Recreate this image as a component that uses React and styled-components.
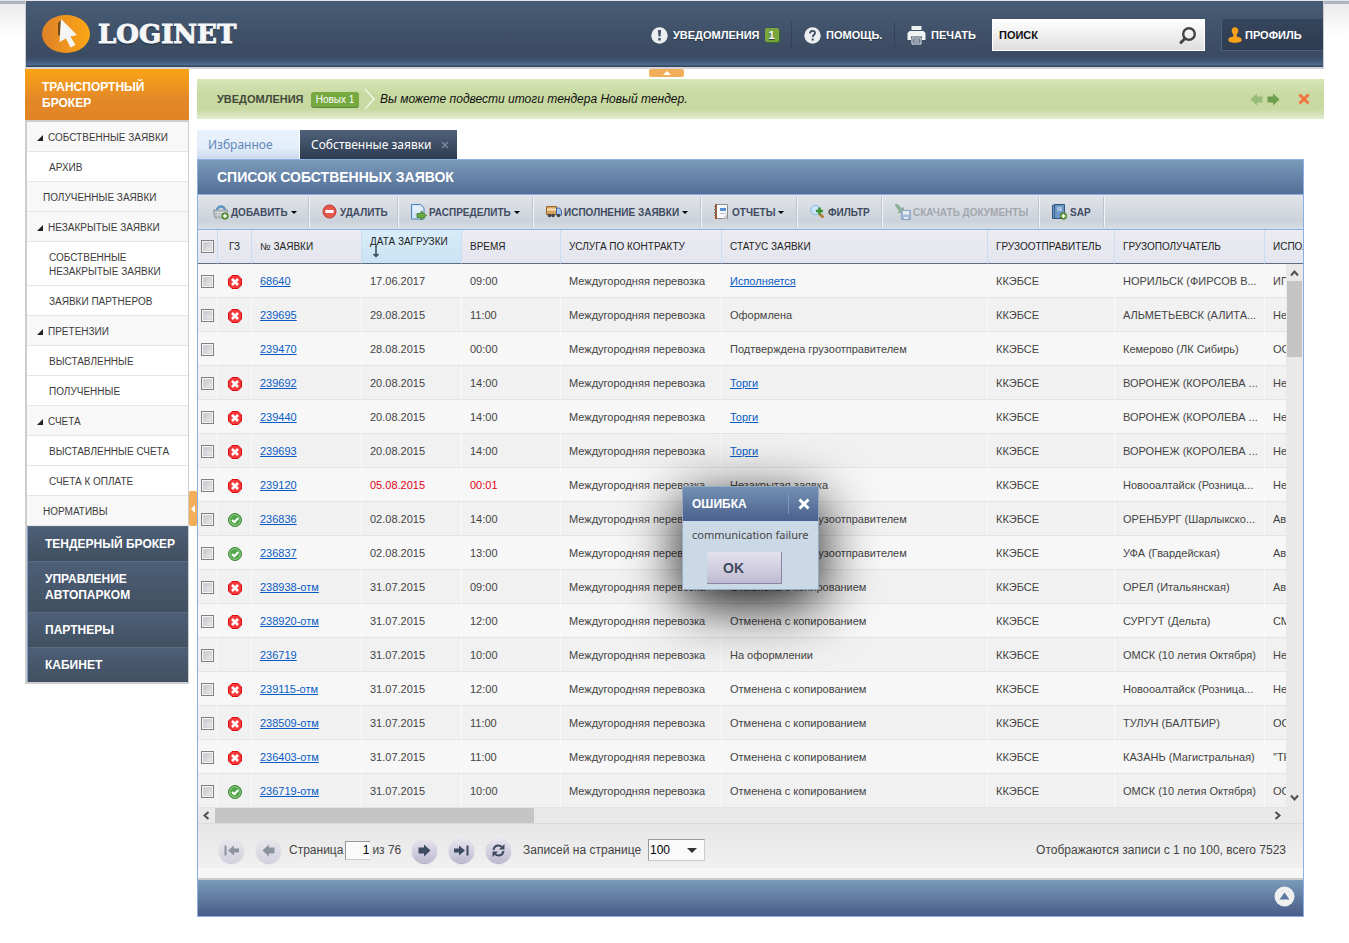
import React from 'react';
import styled, { createGlobalStyle } from 'styled-components';

const sans = '"Liberation Sans", Arial, sans-serif';
const humanist = '"Noto Sans", "Open Sans", sans-serif';

const GlobalStyle = createGlobalStyle`
  *, *::before, *::after { box-sizing: border-box; }
  body {
    margin: 0;
    font-family: ${sans};
    font-size: 11px;
    color: #444;
    background: #fff;
  }
  button, input, select { font-family: inherit; margin: 0; }
  button { padding: 0; border: 0; background: none; cursor: pointer; }
  a { color: inherit; text-decoration: none; }
  svg { display: block; flex: none; }
`;

const Page = styled.div`
  border-top: 1px solid #e6e6ea;
  padding: 0 25px 26px;
  background: linear-gradient(#abb4c1, #abb4c1) 0 0 / 100% 3px no-repeat,
    linear-gradient(#ebebeb, #fff) 0 3px / 100% 32px no-repeat;
`;

/* ---------- header ---------- */

const Header = styled.header`
  display: flex;
  align-items: center;
  height: 68px;
  padding: 2px 0 0 16px;
  border-bottom: 2px solid #d3d3d8;
  border-left: 1px solid #c9cdd3;
  border-right: 1px solid #c9cdd3;
  background: linear-gradient(#485c75 0, #3a4a61 54px, #3f5371 59px, #4f6b91 64px, #33445c 65px);
`;

const Logo = styled.a`
  display: flex;
  align-items: center;
  gap: 8px;
  margin: 0 auto 2px 0;
  color: #f4f6f8;
  font: bold 26px/38px "DejaVu Serif", serif;
  -webkit-text-stroke: 1px #f4f6f8;
  text-shadow: 0 2px 1px #2b384a;
`;

const NavItem = styled.a`
  display: flex;
  align-items: center;
  gap: 5px;
  width: ${(p) => p.$w}px;
  height: 26px;
  padding-left: ${(p) => (p.$first ? 0 : 12)}px;
  color: #fff;
  font-size: 11px;
  font-weight: bold;
  text-shadow: 0 1px 1px #222f40;
  border-right: ${(p) => (p.$last ? 0 : 1)}px solid #33435a;
`;

const Badge = styled.span`
  width: 14px;
  height: 14px;
  border-radius: 2px;
  background: #76a63c;
  box-shadow: 1px 1px 0 #3c6a2a;
  font-size: 11px;
  line-height: 14px;
  text-align: center;
`;

const Search = styled.form`
  display: flex;
  align-items: center;
  width: 213px;
  height: 32px;
  padding-right: 7px;
  margin-right: 16px;
  border: 1px solid #fff;
  background: linear-gradient(#fff, #dedede);
`;

const SearchInput = styled.input`
  flex: 1;
  min-width: 0;
  padding: 0 0 0 6px;
  border: 0;
  outline: 0;
  background: none;
  color: #111;
  font-size: 11px;
  font-weight: bold;
  &::placeholder { color: #111; opacity: 1; }
`;

const Profile = styled.button`
  display: flex;
  align-items: center;
  gap: 3px;
  width: 102px;
  height: 32px;
  padding-left: 6px;
  border: 1px solid #49628a;
  border-width: 0 0 1px 1px;
  background: linear-gradient(#35455c, #2f3c50);
  color: #fff;
  font-size: 11px;
  font-weight: bold;
`;

/* ---------- page body ---------- */

const Columns = styled.div`
  display: flex;
  align-items: flex-start;
`;

const Sidebar = styled.nav`
  position: relative;
  flex: none;
  width: 164px;
`;

const Active = styled.a`
  display: block;
  padding: 10px 17px 9px;
  background: linear-gradient(#fba316, #e38827 60%, #e18426);
  color: #fff;
  font-size: 12px;
  font-weight: bold;
  line-height: 16px;
`;

const MenuList = styled.ul`
  margin: 0;
  padding: 0;
  list-style: none;
  border: 2px solid #cdcdcd;
  border-right-width: 1px;
`;

const MenuLink = styled.a`
  display: flex;
  align-items: center;
  gap: 5px;
  padding: 9px 12px 6px ${(p) => ({ group: 10, leaf: 16, sub: 22 })[p.$kind]}px;
  border-bottom: 1px solid #e6e6e6;
  background: ${(p) => (p.$kind === 'sub' ? '#fff' : '#f8f8f8')};
  color: #3c3c3c;
  font-size: 10px;
  line-height: 14px;
`;

const Section = styled.a`
  display: block;
  padding: 9px 4px 9px 17px;
  border-top: 1px solid #5a6b80;
  border-left: 1px solid #7d9cc6;
  background: linear-gradient(#4d5f77, #415061);
  color: #fff;
  font-size: 12px;
  font-weight: bold;
  line-height: 16px;
`;

const SideHandle = styled.button`
  position: absolute;
  left: 100%;
  top: 422px;
  display: grid;
  place-items: center;
  width: 8px;
  height: 35px;
  border-radius: 2px;
  background: #f2ae59;
`;

const TopHandle = styled.button`
  display: grid;
  place-items: center;
  width: 35px;
  height: 8px;
  margin: 0 0 2px 452px;
  border-radius: 2px;
  background: #f2ae59;
`;

const Main = styled.main`
  flex: 1;
  min-width: 0;
  margin-left: 8px;
`;

const Notice = styled.section`
  display: flex;
  align-items: center;
  height: 40px;
  padding: 0 14px 0 20px;
  background: linear-gradient(#d8e6b9, #c8d9a1 40%, #c8d9a1 75%, #e3edcf);
`;

const NoticeTitle = styled.strong`
  width: 94px;
  color: #42493a;
  font-size: 11px;
  font-weight: bold;
`;

const NoticeCount = styled.span`
  width: 48px;
  height: 15px;
  border-radius: 3px;
  background: #76a93f;
  box-shadow: 0 1px 0 #598636;
  color: #fff;
  font-size: 10px;
  line-height: 15px;
  text-align: center;
`;

const NoticeText = styled.em`
  flex: 1;
  color: #111;
  font-size: 12px;
`;

const NoticeActions = styled.div`
  display: flex;
  align-items: center;
  gap: 4px;
  & > :last-child { margin-left: 14px; }
`;

const Tabs = styled.div`
  display: flex;
  gap: 1px;
  margin-top: 11px;
  font-family: ${humanist};
`;

const Tab = styled.button`
  display: flex;
  align-items: center;
  justify-content: space-between;
  width: ${(p) => p.$w}px;
  height: 29px;
  padding: 0 8px 0 11px;
  font-size: 12px;
  color: ${(p) => (p.$on ? '#fff' : '#5d86b6')};
  background: ${(p) => (p.$on ? 'linear-gradient(#4f617a, #2d3b50)' : 'linear-gradient(#e9f3fd, #e3eefa 60%, #c9d9ea)')};
`;

const Panel = styled.section`
  position: relative;
  margin-right: 20px;
  border: 1px solid #8db0e3;
  background: #f6f6f6;
`;

const PanelTitle = styled.h1`
  margin: 0;
  padding-left: 19px;
  border-bottom: 1px solid #8db0e3;
  background: linear-gradient(#7b9bba, #546d97);
  color: #fff;
  font-size: 14px;
  font-weight: bold;
  line-height: 34px;
`;

const Toolbar = styled.div`
  display: flex;
  align-items: center;
  height: 35px;
  border-bottom: 1px solid #8db0e3;
  background: linear-gradient(#e2e5ea, #cbd2da 75%, #d9dee5);
`;

const ToolButton = styled.button`
  display: flex;
  align-items: center;
  gap: 2px;
  width: ${(p) => p.$w}px;
  height: 30px;
  padding-left: ${(p) => (p.$first ? 15 : 12)}px;
  border-right: 1px solid #f2f4f7;
  box-shadow: inset -1px 0 0 #bcc3cd;
  color: #3f4b60;
  font-size: 10px;
  font-weight: bold;
  white-space: nowrap;
  &:disabled { color: #a3a7ad; cursor: default; }
  &:disabled svg { opacity: 0.5; }
`;

const Caret = styled.i`
  margin-left: 1px;
  border: 3px solid transparent;
  border-top-color: #000;
  border-bottom: 0;
`;

/* ---------- grid ---------- */

const Viewport = styled.div`
  position: relative;
  overflow: hidden;
`;

const Table = styled.table`
  width: 1177px;
  table-layout: fixed;
  border-collapse: separate;
  border-spacing: 0;
`;

const Th = styled.th`
  height: 34px;
  padding: 1px 0 0 8px;
  border-right: 1px solid #cbddf0;
  border-bottom: 1px solid #5f6b7f;
  background: ${(p) => (p.$sorted ? 'linear-gradient(#d9ecf8, #c9e3f4)' : 'linear-gradient(#ececf1, #e3e5ef)')};
  color: #222;
  font-size: 10px;
  font-weight: normal;
  line-height: 12px;
  text-align: ${(p) => (p.$center ? 'center' : 'left')};
  white-space: nowrap;
  &:first-child { padding: 0 0 0 3px; }
  &:nth-child(2) { padding-left: 0; }
  & svg { margin: -2px 0 0 2px; }
`;

const Td = styled.td`
  height: 34px;
  padding: 1px 0 0 8px;
  overflow: hidden;
  border-right: 1px solid #fafafa;
  border-bottom: 1px solid #e3e3e3;
  color: ${(p) => (p.$late ? '#e2001a' : '#444')};
  font-size: 11px;
  white-space: nowrap;
  &:first-child { padding: 2px 0 0 3px; }
  &:nth-child(2) { padding: 3px 0 0 10px; }
`;

const Tr = styled.tr`
  background: #f7f7f7;
  &:nth-child(even) { background: #f1f1f1; }
`;

const CellLink = styled.a`
  color: #0a5cc4;
  text-decoration: underline;
`;

const Check = styled.input`
  appearance: none;
  display: block;
  width: 13px;
  height: 13px;
  border: 1px solid #808080;
  background: linear-gradient(135deg, #b9bdc5, #f3f3f3);
  box-shadow: inset 0 0 0 1px #f4f4f4, inset 0 0 0 2px #d4d4d6;
`;

const VScroll = styled.div`
  position: absolute;
  top: 34px;
  right: 0;
  bottom: 0;
  display: flex;
  flex-direction: column;
  align-items: center;
  width: 17px;
  padding: 5px 0 6px;
  background: #e9e9e9;
`;

const VThumb = styled.div`
  width: 15px;
  height: 76px;
  margin: 3px 0 auto;
  background: #c5c5c5;
`;

const HScroll = styled.div`
  display: flex;
  align-items: center;
  height: 15px;
  padding: 0 21px 0 4px;
  background: #e9e9e9;
`;

const HThumb = styled.div`
  width: 319px;
  height: 15px;
  margin: 0 auto 0 4px;
  background: #c5c5c5;
`;

/* ---------- pager ---------- */

const Pager = styled.div`
  display: flex;
  align-items: center;
  height: 55px;
  padding: 8px 17px 0 21px;
  border-top: 1px solid #dadada;
  border-bottom: 10px solid #f6f6f6;
  background: linear-gradient(#e7e7e7, #f0f0f0);
  font-size: 12px;
  color: #444;
`;

const RoundButton = styled.button`
  display: grid;
  place-items: center;
  width: 25px;
  height: 25px;
  margin-right: 12px;
  border-radius: 50%;
  background: linear-gradient(#e9e7f0, #bcb9d0);
  box-shadow: 0 1px 1px #a9a5c2;
  color: #3d4b60;
  &:disabled { opacity: 0.55; }
`;

const PageLabel = styled.label`
  display: flex;
  align-items: center;
  gap: 2px;
  width: 123px;
  margin-left: -4px;
  white-space: nowrap;
`;

const PageInput = styled.input`
  width: 25px;
  height: 19px;
  padding: 0 1px 0 0;
  border: 1px solid #999;
  border-right: 0;
  border-bottom-color: #ccc;
  background: #fafafa;
  font-size: 12px;
  text-align: right;
  color: #000;
`;

const SizeField = styled.label`
  display: flex;
  align-items: center;
`;

const SizeText = styled.span`
  width: 125px;
`;

const SelectWrap = styled.span`
  position: relative;
  & svg { position: absolute; right: 8px; top: 9px; pointer-events: none; }
`;

const Select = styled.select`
  appearance: none;
  display: block;
  width: 57px;
  height: 22px;
  padding: 0 0 0 1px;
  border: 1px solid #999;
  border-right-color: #ccc;
  border-bottom-color: #ccc;
  border-radius: 0;
  background: #fafafa;
  font-size: 12px;
  color: #000;
`;

const Total = styled.span`
  margin-left: auto;
`;

const PanelFooter = styled.div`
  display: flex;
  align-items: center;
  justify-content: flex-end;
  height: 38px;
  padding: 0 8px 3px 0;
  border-top: 2px solid #c9cbcf;
  background: linear-gradient(#7b9bba, #485c88);
`;

/* ---------- dialog ---------- */

const Dialog = styled.div`
  position: absolute;
  inset: 0;
  z-index: 2;
  width: 137px;
  height: fit-content;
  margin: auto;
  border: 1px solid #93a9c4;
  background: #cbd8e6;
  box-shadow: 0 14px 56px rgba(0, 0, 0, 0.95);
`;

const DialogHead = styled.div`
  display: flex;
  align-items: center;
  justify-content: space-between;
  height: 34px;
  padding-left: 9px;
  background: linear-gradient(#7391b3, #4b5f8e);
  color: #fff;
  font-size: 12px;
  font-weight: bold;
`;

const DialogClose = styled.button`
  display: grid;
  place-items: center;
  width: 30px;
  height: 20px;
  border-left: 1px solid #7f97ba;
`;

const DialogText = styled.p`
  margin: 0;
  padding: 5px 9px 4px;
  font: 11px/18px ${humanist};
  color: #444;
  white-space: nowrap;
`;

const DialogButton = styled.button`
  display: block;
  width: 75px;
  height: 32px;
  margin: 4px 24px 5px;
  padding-left: 16px;
  border: 1px solid #8784a4;
  border-width: 0 1px 1px 0;
  background: linear-gradient(#e4e2ed, #bfbcd2);
  color: #3f4b60;
  font-size: 14px;
  font-weight: bold;
  text-align: left;
`;

/* ---------- drawings ---------- */

const LogoMark = () => (
  <svg width="48" height="38" viewBox="0 0 48 38">
    <defs>
      <linearGradient id="mark" x1="0" x2="1">
        <stop offset="0" stopColor="#df8128" />
        <stop offset="1" stopColor="#fba715" />
      </linearGradient>
    </defs>
    <ellipse cx="24" cy="19" rx="24" ry="19" fill="url(#mark)" />
    <path d="M16 8l3-3-1 16-2-1z" fill="#6b4a22" />
    <path d="M19 4l16 16-6.500 1.500 5 8.500-5 2.500-4.500-9-6.500 3.500z" fill="#f5f5f5" />
  </svg>
);

const CircleSign = ({ children }) => (
  <svg width="17" height="17" viewBox="0 0 17 17">
    <circle cx="8.5" cy="8.5" r="8.2" fill="#eceef1" />
    {children}
  </svg>
);

const Printer = () => (
  <svg width="19" height="19" viewBox="0 0 19 19">
    <path d="M4.500 0h10v4h-10zM2.500 5h14l2 2v7h-3.500v-3.500H4V14H.5V7z" fill="#eff1f3" />
    <path d="M5 12h9v6H5z" fill="#3f4f66" stroke="#eff1f3" />
    <path d="M6.500 14h6M6.500 16h6" stroke="#eff1f3" />
  </svg>
);

const Magnifier = () => (
  <svg width="19" height="19" viewBox="0 0 19 19" fill="none" stroke="#444">
    <circle cx="11" cy="8" r="5.800" strokeWidth="2.400" />
    <path d="M7 12.500l-4 4" strokeWidth="3" strokeLinecap="round" />
  </svg>
);

const Person = () => (
  <svg width="14" height="16" viewBox="0 0 14 16" fill="#f9a11b">
    <path d="M7 .3c2 0 3.300 1.300 3.300 3.200 0 1.700-.8 2.800-1.600 4v2c2.800.5 5 1.300 5 3.500 0 1.900-2.400 2.700-6.700 2.700S.3 14.900.3 13c0-2.200 2.200-3 5-3.500v-2c-.8-1.200-1.600-2.300-1.600-4C3.700 1.600 5 .3 7 .3z" />
  </svg>
);

const Triangle = () => (
  <svg width="6" height="6" viewBox="0 0 6 6">
    <path d="M6 0v6H0z" fill="#222" />
  </svg>
);

const BlockArrow = ({ left, color = 'currentColor' }) => (
  <svg width="13" height="13" viewBox="0 0 13 13">
    <path
      d="M.5 3.500H6V0.500L12.500 6.500 6 12.500V9.500H.5z"
      fill={color}
      transform={left ? 'matrix(-1 0 0 1 13 0)' : undefined}
    />
  </svg>
);

const EndArrow = ({ left }) => (
  <svg width="15" height="11" viewBox="0 0 15 11">
    <path
      d="M0 3.500h5V0.500L11 5.500 5 10.500v-3H0zM12.500 0.500h2v10h-2z"
      fill="currentColor"
      transform={left ? 'matrix(-1 0 0 1 15 0)' : undefined}
    />
  </svg>
);

const Reload = () => (
  <svg width="13" height="13" viewBox="0 0 13 13" fill="none" stroke="currentColor" strokeWidth="2">
    <path d="M1.500 6C2 3 4 1.500 6.500 1.500c1.500 0 2.500.5 3.500 1.500M11.500 7C11 10 9 11.500 6.500 11.500 5 11.500 4 11 3 10" />
    <path d="M12.500 0v5.500H7zM.5 13V7.500H6z" fill="currentColor" stroke="none" />
  </svg>
);

const Cross = ({ size, color, w }) => (
  <svg width={size} height={size} viewBox="0 0 12 12" stroke={color} strokeWidth={w}>
    <path d="M1.500 1.500l9 9M10.500 1.500l-9 9" />
  </svg>
);

const Chevron = ({ turn }) => (
  <svg width="9" height="9" viewBox="0 0 9 9" fill="none" stroke="#4f4f4f" strokeWidth="2">
    <path d="M1 6.500l3.500-4 3.500 4" transform={`rotate(${turn} 4.500 4.500)`} />
  </svg>
);

const Mark = ({ ok }) => (
  <svg width="14" height="14" viewBox="0 0 14 14" role="img" aria-label={ok ? 'да' : 'нет'}>
    {ok ? (
      <>
        <circle cx="7" cy="7" r="6.500" fill="#4fa548" stroke="#3b8736" />
        <circle cx="7" cy="7" r="5.300" fill="none" stroke="#a5d79c" strokeWidth=".8" />
        <path d="M4 7l2.300 2.300L10.300 5" fill="none" stroke="#fff" strokeWidth="2" />
      </>
    ) : (
      <>
        <path d="M4 .5h6L13.500 4v6L10 13.500H4L.5 10V4z" fill="#f2383b" stroke="#dc0a10" />
        <path d="M4 4l6 6M10 4l-6 6" stroke="#fff" strokeWidth="2.600" />
      </>
    )}
  </svg>
);

const Plus = ({ x, y }) => (
  <g transform={`translate(${x} ${y})`}>
    <circle r="3.300" fill="#5d9a35" stroke="#3f7622" strokeWidth=".7" />
    <path d="M-2 0h4M0-2v4" stroke="#fff" strokeWidth="1.300" />
  </g>
);

const toolIcons = {
  basket: (
    <>
      <path d="M4 7c0-6 8-6 8 0" fill="none" stroke="#5b94bf" strokeWidth="2.500" />
      <path d="M0 6h15l-2 8H2z" fill="#a9aeb2" stroke="#878d92" strokeWidth=".6" />
      <path d="M1 8.500h13M2 11h11M5 6v8M8 6v8M11 6v8" stroke="#e5e7e9" strokeWidth=".8" />
      <Plus x={12} y={12} />
    </>
  ),
  remove: (
    <>
      <circle cx="7.500" cy="7.500" r="6.500" fill="#e4584e" stroke="#bd3b34" />
      <path d="M3.500 7.500h8" stroke="#fff" strokeWidth="3" />
    </>
  ),
  share: (
    <>
      <path d="M.5.500h9l3.500 3V15H.5z" fill="#d3e5f9" stroke="#4f80ba" />
      <path d="M2 3h6M2 5h9M2 7h9" stroke="#f4f9ff" />
      <path d="M6 9.500h4V7l5.500 4.500L10 16v-2.500H6z" fill="#6ba945" stroke="#3d7a26" strokeWidth=".8" />
    </>
  ),
  truck: (
    <>
      <path d="M.5 2.500h10v8H.5z" fill="#d9a45c" stroke="#97682c" />
      <path d="M1 5.500h9" stroke="#f8e3bd" strokeWidth="2" />
      <path d="M10.500 4h3l2 3v4h-5z" fill="#a9c9ec" stroke="#3f679b" />
      <circle cx="3.500" cy="11.500" r="1.800" fill="#444" />
      <circle cx="7" cy="11.500" r="1.800" fill="#444" />
      <circle cx="12.500" cy="11.500" r="1.800" fill="#444" />
    </>
  ),
  report: (
    <>
      <path d="M2.500.5h11v14h-11z" fill="#f8f8f8" stroke="#8c8c8c" />
      <path d="M2 0v15" stroke="#a3532c" strokeWidth="2" />
      <path d="M0 2.500h3M0 5.500h3M0 8.500h3M0 11.500h3" stroke="#777" />
      <path d="M6 4h6v3H6z" fill="#5b8fd6" />
      <path d="M6 9.500h6" stroke="#b5c6dc" />
      <path d="M13 10v4.500H8.500z" fill="#d2d2d2" />
    </>
  ),
  filter: (
    <>
      <circle cx="5.500" cy="6" r="4.800" fill="#c9e1f6" stroke="#8fb7dc" />
      <path d="M9.500 10l4 3.500" stroke="#b87834" strokeWidth="2.800" />
      <path d="M6 7h7M9.500 3.500v7" stroke="#3f9137" strokeWidth="2.600" />
    </>
  ),
  download: (
    <>
      <path d="M0 1l2-1 5 5 1.500-1.500V8.500H3L4.500 7z" fill="#4c8f52" stroke="#37773f" strokeWidth=".8" />
      <path d="M6.500 6.500h9v9h-9z" fill="#7fa6dc" stroke="#446fae" />
      <path d="M8 7h6v3.500H8zM9 13h4v2H9z" fill="#fff" />
    </>
  ),
  book: (
    <>
      <path d="M.5 1.500l2-1h10v14H.5z" fill="#6d98c6" stroke="#2f527c" />
      <path d="M2.500 1v13" stroke="#355e8e" />
      <path d="M5 4h5M5 6h5" stroke="#dce9f6" />
      <Plus x={11.5} y={12} />
    </>
  ),
};

const ToolIcon = ({ name }) => (
  <svg width="16" height="16" viewBox="0 0 16 16">{toolIcons[name]}</svg>
);

/* ---------- data ---------- */

const menu = [
  ['group', 'СОБСТВЕННЫЕ ЗАЯВКИ'],
  ['sub', 'АРХИВ'],
  ['leaf', 'ПОЛУЧЕННЫЕ ЗАЯВКИ'],
  ['group', 'НЕЗАКРЫТЫЕ ЗАЯВКИ'],
  ['sub', 'СОБСТВЕННЫЕ НЕЗАКРЫТЫЕ ЗАЯВКИ'],
  ['sub', 'ЗАЯВКИ ПАРТНЕРОВ'],
  ['group', 'ПРЕТЕНЗИИ'],
  ['sub', 'ВЫСТАВЛЕННЫЕ'],
  ['sub', 'ПОЛУЧЕННЫЕ'],
  ['group', 'СЧЕТА'],
  ['sub', 'ВЫСТАВЛЕННЫЕ СЧЕТА'],
  ['sub', 'СЧЕТА К ОПЛАТЕ'],
  ['leaf', 'НОРМАТИВЫ'],
];

const sections = ['ТЕНДЕРНЫЙ БРОКЕР', 'УПРАВЛЕНИЕ АВТОПАРКОМ', 'ПАРТНЕРЫ', 'КАБИНЕТ'];

const tools = [
  { icon: 'basket', text: 'ДОБАВИТЬ', w: 112, menu: true },
  { icon: 'remove', text: 'УДАЛИТЬ', w: 89 },
  { icon: 'share', text: 'РАСПРЕДЕЛИТЬ', w: 135, menu: true },
  { icon: 'truck', text: 'ИСПОЛНЕНИЕ ЗАЯВКИ', w: 168, menu: true },
  { icon: 'report', text: 'ОТЧЕТЫ', w: 96, menu: true },
  { icon: 'filter', text: 'ФИЛЬТР', w: 85 },
  { icon: 'download', text: 'СКАЧАТЬ ДОКУМЕНТЫ', w: 157, off: true },
  { icon: 'book', text: 'SAP', w: 65 },
];

const widths = [20, 34, 110, 100, 99, 161, 266, 127, 150, 110];

const copied = 'Отменена с копированием';
const confirmed = 'Подтверждена грузоотправителем';
const rows = [
  ['x', '68640', '17.06.2017', '09:00', 'Исполняется', 'НОРИЛЬСК (ФИРСОВ В...', 'ИП'],
  ['x', '239695', '29.08.2015', '11:00', 'Оформлена', 'АЛЬМЕТЬЕВСК (АЛИТА...', 'Не'],
  ['', '239470', '28.08.2015', '00:00', confirmed, 'Кемерово (ЛК Сибирь)', 'ООО'],
  ['x', '239692', '20.08.2015', '14:00', 'Торги', 'ВОРОНЕЖ (КОРОЛЕВА ...', 'Не'],
  ['x', '239440', '20.08.2015', '14:00', 'Торги', 'ВОРОНЕЖ (КОРОЛЕВА ...', 'Не'],
  ['x', '239693', '20.08.2015', '14:00', 'Торги', 'ВОРОНЕЖ (КОРОЛЕВА ...', 'Не'],
  ['x', '239120', '05.08.2015', '00:01', 'Незакрытая заявка', 'Новооалтайск (Розница...', 'Не'],
  ['v', '236836', '02.08.2015', '14:00', confirmed, 'ОРЕНБУРГ (Шарлыкско...', 'Авто'],
  ['v', '236837', '02.08.2015', '13:00', confirmed, 'УФА (Гвардейская)', 'Авто'],
  ['x', '238938-отм', '31.07.2015', '09:00', copied, 'ОРЕЛ (Итальянская)', 'Авто'],
  ['x', '238920-отм', '31.07.2015', '12:00', copied, 'СУРГУТ (Дельта)', 'СМ'],
  ['', '236719', '31.07.2015', '10:00', 'На оформлении', 'ОМСК (10 летия Октября)', 'Не'],
  ['x', '239115-отм', '31.07.2015', '12:00', copied, 'Новооалтайск (Розница...', 'Не'],
  ['x', '238509-отм', '31.07.2015', '11:00', copied, 'ТУЛУН (БАЛТБИР)', 'ООО'],
  ['x', '236403-отм', '31.07.2015', '11:00', copied, 'КАЗАНЬ (Магистральная)', '"ТК'],
  ['v', '236719-отм', '31.07.2015', '10:00', copied, 'ОМСК (10 летия Октября)', 'ООО'],
];
const linked = ['Исполняется', 'Торги'];

/* ---------- parts ---------- */

function TopBar() {
  return (
    <Header>
      <Logo href="#"><LogoMark />LOGINET</Logo>
      <NavItem href="#" $w={141} $first>
        <CircleSign>
          <path d="M7 3h3l-.5 6.500h-2zM7.300 11h2.400v2.500H7.300z" fill="#3c4b61" />
        </CircleSign>
        УВЕДОМЛЕНИЯ
        <Badge>1</Badge>
      </NavItem>
      <NavItem href="#" $w={103}>
        <CircleSign>
          <path d="M6 6.500C6 3 11 3 11 6c0 1.800-2.300 1.800-2.300 4" fill="none" stroke="#3c4b61" strokeWidth="1.800" />
          <path d="M7.700 11.500h2v2h-2z" fill="#3c4b61" />
        </CircleSign>
        ПОМОЩЬ.
      </NavItem>
      <NavItem href="#" $w={97} $last><Printer />ПЕЧАТЬ</NavItem>
      <Search>
        <SearchInput type="text" aria-label="Поиск" placeholder="ПОИСК" />
        <button type="button" aria-label="Найти"><Magnifier /></button>
      </Search>
      <Profile type="button"><Person />ПРОФИЛЬ</Profile>
    </Header>
  );
}

function SideMenu() {
  return (
    <Sidebar>
      <Active href="#">ТРАНСПОРТНЫЙ БРОКЕР</Active>
      <MenuList>
        {menu.map(([kind, text]) => (
          <li key={text}>
            <MenuLink href="#" $kind={kind}>
              {kind === 'group' && <Triangle />}
              {text}
            </MenuLink>
          </li>
        ))}
        {sections.map((text) => (
          <li key={text}><Section href="#">{text}</Section></li>
        ))}
      </MenuList>
      <SideHandle type="button" aria-label="Свернуть меню">
        <svg width="4" height="8" viewBox="0 0 4 8"><path d="M4 0v8L0 4z" fill="#fff" /></svg>
      </SideHandle>
    </Sidebar>
  );
}

function Grid() {
  return (
    <>
      <Viewport>
        <Table>
          <colgroup>{widths.map((w, i) => <col key={i} width={w} />)}</colgroup>
          <thead>
            <tr>
              <Th><Check type="checkbox" aria-label="Выбрать все" /></Th>
              <Th $center>ГЗ</Th>
              <Th>№ ЗАЯВКИ</Th>
              <Th $sorted>
                ДАТА ЗАГРУЗКИ
                <svg width="8" height="12" viewBox="0 0 8 12">
                  <path d="M4 0v10M1.500 8L4 10.500 6.500 8" fill="none" stroke="#39485c" strokeWidth="1.500" />
                </svg>
              </Th>
              <Th>ВРЕМЯ</Th>
              <Th>УСЛУГА ПО КОНТРАКТУ</Th>
              <Th>СТАТУС ЗАЯВКИ</Th>
              <Th>ГРУЗООТПРАВИТЕЛЬ</Th>
              <Th>ГРУЗОПОЛУЧАТЕЛЬ</Th>
              <Th>ИСПОЛНИТЕЛЬ</Th>
            </tr>
          </thead>
          <tbody>
            {rows.map(([mark, id, date, time, status, to, by]) => {
              const late = id === '239120';
              return (
                <Tr key={id}>
                  <Td><Check type="checkbox" aria-label={`Выбрать ${id}`} /></Td>
                  <Td>{mark && <Mark ok={mark === 'v'} />}</Td>
                  <Td><CellLink href="#">{id}</CellLink></Td>
                  <Td $late={late}>{date}</Td>
                  <Td $late={late}>{time}</Td>
                  <Td>Междугородняя перевозка</Td>
                  <Td>{linked.includes(status) ? <CellLink href="#">{status}</CellLink> : status}</Td>
                  <Td>ККЭБСЕ</Td>
                  <Td>{to}</Td>
                  <Td>{by}</Td>
                </Tr>
              );
            })}
          </tbody>
        </Table>
        <VScroll>
          <Chevron turn={0} />
          <VThumb />
          <Chevron turn={180} />
        </VScroll>
      </Viewport>
      <HScroll>
        <Chevron turn={-90} />
        <HThumb />
        <Chevron turn={90} />
      </HScroll>
    </>
  );
}

function PagerBar() {
  return (
    <Pager>
      <RoundButton type="button" disabled aria-label="Первая"><EndArrow left /></RoundButton>
      <RoundButton type="button" disabled aria-label="Назад"><BlockArrow left /></RoundButton>
      <PageLabel>
        <span>Страница</span>
        <PageInput type="text" defaultValue="1" />
        <span>из 76</span>
      </PageLabel>
      <RoundButton type="button" aria-label="Вперед"><BlockArrow /></RoundButton>
      <RoundButton type="button" aria-label="Последняя"><EndArrow /></RoundButton>
      <RoundButton type="button" aria-label="Обновить"><Reload /></RoundButton>
      <SizeField>
        <SizeText>Записей на странице</SizeText>
        <SelectWrap>
          <Select defaultValue="100">
            <option>50</option>
            <option>100</option>
          </Select>
          <svg width="10" height="5" viewBox="0 0 10 5"><path d="M0 0h10L5 5z" fill="#333" /></svg>
        </SelectWrap>
      </SizeField>
      <Total>Отображаются записи с 1 по 100, всего 7523</Total>
    </Pager>
  );
}

function ErrorDialog() {
  return (
    <Dialog role="dialog" aria-label="Ошибка">
      <DialogHead>
        ОШИБКА
        <DialogClose type="button" aria-label="Закрыть"><Cross size={12} color="#fff" w={3} /></DialogClose>
      </DialogHead>
      <DialogText>communication failure</DialogText>
      <DialogButton type="button">OK</DialogButton>
    </Dialog>
  );
}

export default function App() {
  return (
    <Page>
      <GlobalStyle />
      <TopBar />
      <Columns>
        <SideMenu />
        <Main>
          <TopHandle type="button" aria-label="Свернуть шапку">
            <svg width="8" height="4" viewBox="0 0 8 4"><path d="M0 4h8L4 0z" fill="#fff" /></svg>
          </TopHandle>
          <Notice>
            <NoticeTitle>УВЕДОМЛЕНИЯ</NoticeTitle>
            <NoticeCount>Новых 1</NoticeCount>
            <svg width="21" height="22" viewBox="0 0 21 22" fill="none">
              <path d="M6 1l9 10-9 10" stroke="#f1f6e4" strokeWidth="1.500" />
            </svg>
            <NoticeText>Вы можете подвести итоги тендера Новый тендер.</NoticeText>
            <NoticeActions>
              <button type="button" aria-label="Предыдущее"><BlockArrow left color="#97bd78" /></button>
              <button type="button" aria-label="Следующее"><BlockArrow color="#6c9f4c" /></button>
              <button type="button" aria-label="Закрыть"><Cross size={12} color="#f27440" w={3} /></button>
            </NoticeActions>
          </Notice>
          <Tabs>
            <Tab type="button" $w={102}>Избранное</Tab>
            <Tab type="button" $w={157} $on>
              Собственные заявки
              <Cross size={8} color="#7e8ea3" w={2} />
            </Tab>
          </Tabs>
          <Panel>
            <PanelTitle>СПИСОК СОБСТВЕННЫХ ЗАЯВОК</PanelTitle>
            <Toolbar>
              {tools.map((t, i) => (
                <ToolButton key={t.text} type="button" $w={t.w} $first={i === 0} disabled={t.off}>
                  <ToolIcon name={t.icon} />
                  {t.text}
                  {t.menu && <Caret />}
                </ToolButton>
              ))}
            </Toolbar>
            <Grid />
            <PagerBar />
            <PanelFooter>
              <button type="button" aria-label="Наверх">
                <svg width="21" height="21" viewBox="0 0 21 21">
                  <circle cx="10.500" cy="10.500" r="10" fill="#efefef" />
                  <path d="M5.500 13.500h10l-5-7z" fill="#5b78a3" />
                </svg>
              </button>
            </PanelFooter>
            <ErrorDialog />
          </Panel>
        </Main>
      </Columns>
    </Page>
  );
}
